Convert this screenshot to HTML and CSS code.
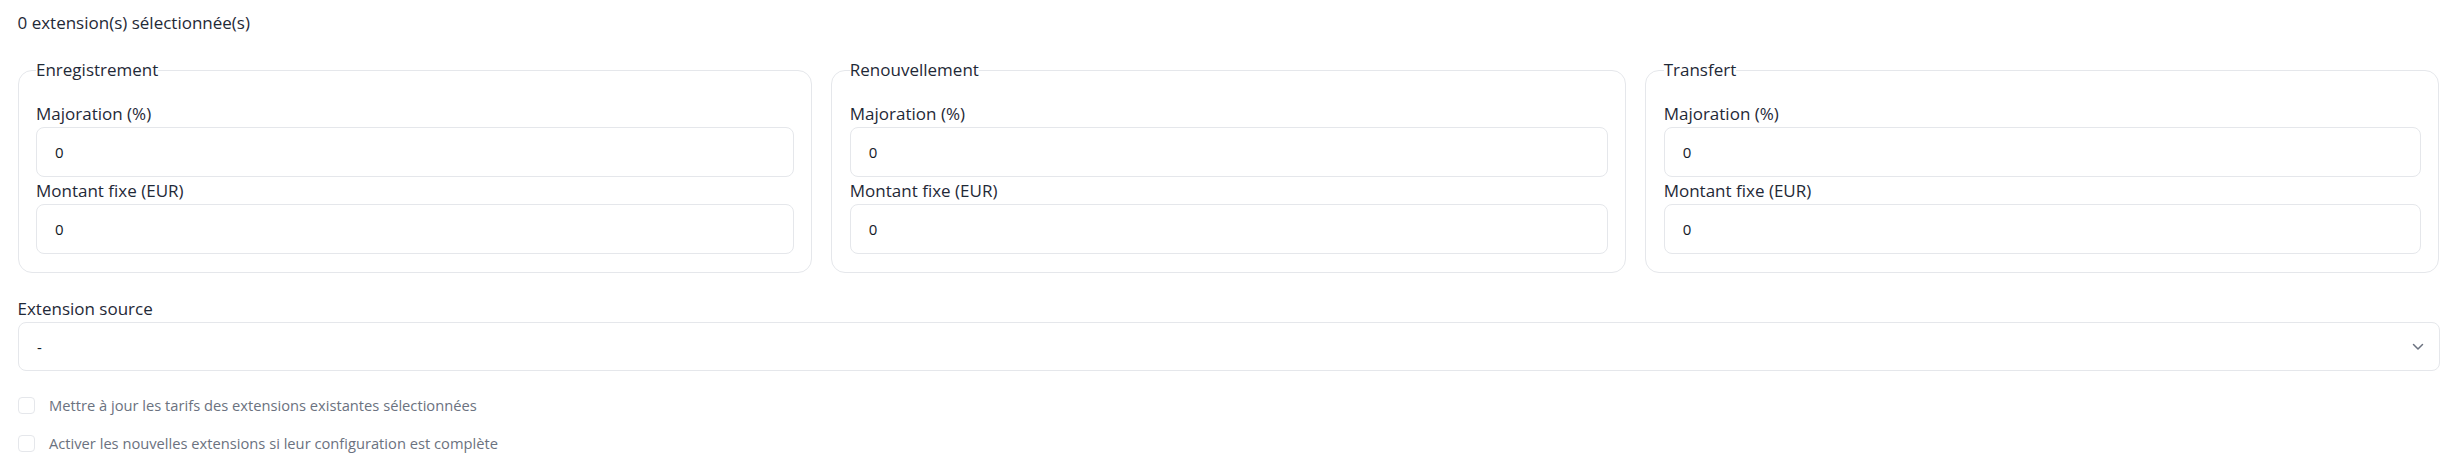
FILE: index.html
```html
<!DOCTYPE html>
<html lang="fr">
<head>
<meta charset="utf-8">
<title>Extensions</title>
<link rel="stylesheet" href="styles.css">
</head>
<body>
<div class="page">
  <div class="count">0 extension(s) sélectionnée(s)</div>
  <div class="groups">
    <fieldset class="group">
      <legend>Enregistrement</legend>
      <label class="field-label">Majoration (%)</label>
      <div class="input">0</div>
      <label class="field-label">Montant fixe (EUR)</label>
      <div class="input">0</div>
    </fieldset>
    <fieldset class="group">
      <legend>Renouvellement</legend>
      <label class="field-label">Majoration (%)</label>
      <div class="input">0</div>
      <label class="field-label">Montant fixe (EUR)</label>
      <div class="input">0</div>
    </fieldset>
    <fieldset class="group">
      <legend>Transfert</legend>
      <label class="field-label">Majoration (%)</label>
      <div class="input">0</div>
      <label class="field-label">Montant fixe (EUR)</label>
      <div class="input">0</div>
    </fieldset>
  </div>
  <label class="field-label source-label">Extension source</label>
  <div class="select">
    <span class="select-value">-</span>
    <svg class="chevron" width="12" height="8" viewBox="0 0 12 8" aria-hidden="true"><path d="M1.5 1.5 L6 6 L10.5 1.5" fill="none" stroke="#6b7280" stroke-width="1.5" stroke-linecap="round" stroke-linejoin="round"/></svg>
  </div>
  <div class="checks">
    <label class="check"><span class="box"></span><span class="check-text">Mettre à jour les tarifs des extensions existantes sélectionnées</span></label>
    <label class="check"><span class="box"></span><span class="check-text">Activer les nouvelles extensions si leur configuration est complète</span></label>
  </div>
</div>
</body>
</html>
```
FILE: styles.css
```css
html, body {
  margin: 0;
  padding: 0;
  background: #ffffff;
}
body {
  font-family: "Open Sans", "Noto Sans", "Liberation Sans", sans-serif;
  color: #1f2937;
}
.page {
  padding: 10px 17.5px 0 17.5px;
}
.count {
  font-size: 17px;
  line-height: 26px;
  margin-bottom: 21px;
}
.groups {
  display: grid;
  grid-template-columns: repeat(3, 1fr);
  gap: 19.5px;
}
.group {
  margin: 0;
  min-width: 0;
  border: 1px solid #e5e7eb;
  border-radius: 14px;
  padding: 17px 17px 17.5px 17.5px;
}
.group legend {
  padding: 0;
  font-size: 17px;
  line-height: 26px;
  color: #1f2937;
}
.field-label {
  display: block;
  font-size: 17px;
  line-height: 27px;
  color: #1f2937;
}
.input {
  box-sizing: border-box;
  height: 50px;
  border: 1px solid #e5e7eb;
  border-radius: 8px;
  padding: 0 18px;
  display: flex;
  align-items: center;
  font-size: 15px;
  color: #111827;
}
.source-label {
  margin-top: 22.5px;
}
.select {
  box-sizing: border-box;
  height: 49px;
  border: 1px solid #e5e7eb;
  border-radius: 8px;
  padding: 0 15px 0 18.5px;
  display: flex;
  align-items: center;
  justify-content: space-between;
  font-size: 15px;
  color: #111827;
}
.chevron {
  display: block;
}
.checks {
  margin-top: 21px;
  display: flex;
  flex-direction: column;
  gap: 12px;
}
.check {
  display: flex;
  align-items: center;
  height: 26px;
  gap: 14.5px;
}
.box {
  box-sizing: border-box;
  width: 17px;
  height: 17px;
  border: 1px solid #e5e7eb;
  border-radius: 4px;
  background: #ffffff;
  flex: none;
}
.check-text {
  font-size: 14.7px;
  color: #6b7280;
}
```
